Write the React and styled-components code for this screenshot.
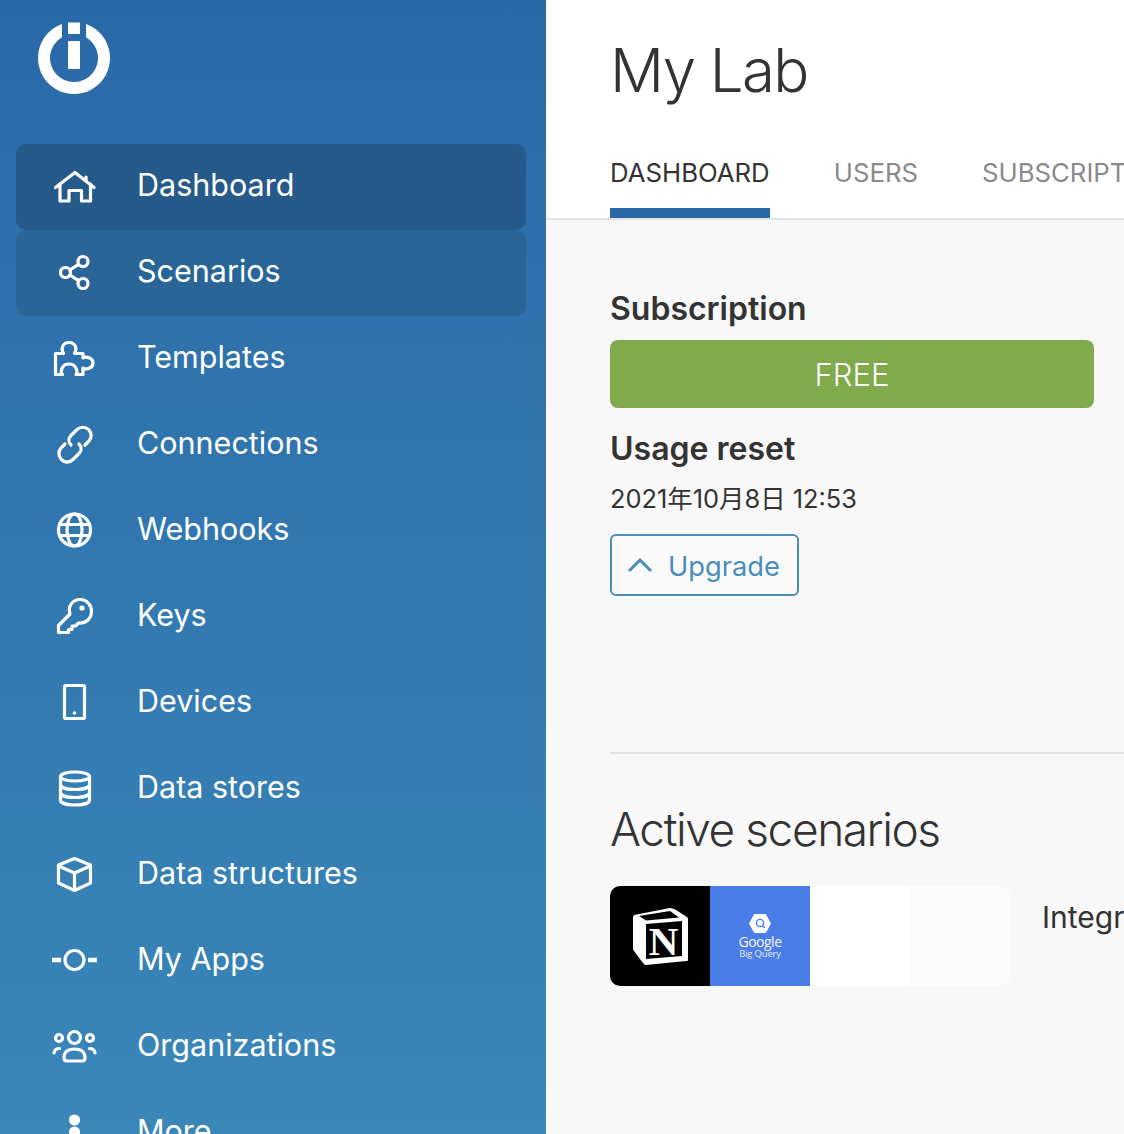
import React from 'react'
import styled, { createGlobalStyle } from 'styled-components'

const Global = createGlobalStyle`
  html, body { margin: 0; padding: 0; height: 100%; overflow: hidden; }
  body { font-family: "Inter", "Noto Sans CJK JP", sans-serif; color: #333; }
`

const Page = styled.div`
  display: flex;
  width: 1124px;
  height: 1134px;
  overflow: hidden;
`

const Sidebar = styled.aside`
  flex: 0 0 546px;
  height: 1134px;
  overflow: hidden;
  background: linear-gradient(180deg, #2a69a8 0%, #3a87b8 100%);
`

const LogoWrap = styled.div`
  height: 144px;
  padding: 21px 0 0 38px;
  box-sizing: border-box;
`

const Nav = styled.nav`
  display: flex;
  flex-direction: column;
  padding: 0 20px 0 16px;
`

const NavItem = styled.a`
  display: flex;
  align-items: center;
  flex: 0 0 86px;
  padding-left: 36px;
  box-sizing: border-box;
  border-radius: 10px;
  color: #fff;
  font-size: 30.5px;
  background: ${p => (p.$state === 'active' ? '#255a8a' : p.$state === 'hover' ? '#2a6598' : 'transparent')};
`

const NavLabel = styled.span`
  padding-bottom: 5px;
`

const IconBox = styled.span`
  display: flex;
  justify-content: center;
  width: 46px;
  margin-right: 39px;
  svg {
    width: 46px;
    height: 46px;
    fill: none;
    stroke: #fff;
    stroke-width: 3.2;
    stroke-linecap: round;
    stroke-linejoin: round;
  }
`

const Main = styled.main`
  flex: 1;
  min-width: 0;
  background: #f8f8f8;
  overflow: hidden;
`

const Header = styled.header`
  height: 220px;
  box-sizing: border-box;
  padding-left: 64px;
  background: #fff;
  border-bottom: 2px solid #e2e2e2;
  display: flex;
  flex-direction: column;
`

const Title = styled.h1`
  margin: 0;
  height: 140px;
  line-height: 140px;
  font-size: 60px;
  font-weight: 300;
  letter-spacing: -1.6px;
  color: #333;
  white-space: nowrap;
`

const Tabs = styled.div`
  display: flex;
  gap: 64px;
  white-space: nowrap;
`

const Tab = styled.div`
  height: 78px;
  box-sizing: border-box;
  padding-top: 17px;
  font-size: 25.75px;
  line-height: 32px;
  color: ${p => (p.$active ? '#333' : '#8a8a8a')};
  border-bottom: 10px solid ${p => (p.$active ? '#2a69a8' : 'transparent')};
`

const Section = styled.section`
  margin-left: 64px;
  height: 534px;
  box-sizing: border-box;
  padding-top: 68px;
  border-bottom: 2px solid #e2e2e2;
`

const Column = styled.div`
  width: 484px;
`

const Label = styled.h3`
  margin: 0;
  font-size: 32px;
  line-height: 42px;
  font-weight: 600;
  color: #333;
`

const PlanBar = styled.div`
  height: 68px;
  margin-top: 10px;
  border-radius: 8px;
  background: #80aa4b;
  color: #fff;
  font-size: 31px;
  line-height: 70px;
  text-align: center;
  font-weight: 300;
`

const ResetLabel = styled(Label)`
  margin-top: 20px;
`

const DateText = styled.div`
  margin-top: 9px;
  font-size: 25.4px;
  line-height: 40px;
  color: #333;
`

const UpgradeBtn = styled.button`
  display: flex;
  align-items: center;
  gap: 15px;
  height: 62px;
  margin-top: 15px;
  padding: 0 17px 0 15px;
  background: #fafafa;
  border: 2px solid #4a8dbb;
  border-radius: 6px;
  color: #4a8dbb;
  font-family: inherit;
  font-size: 27.3px;
  svg {
    width: 26px;
    height: 16px;
    fill: none;
    stroke: #4a8dbb;
    stroke-width: 3;
  }
`

const UpgradeText = styled.span`
  padding-top: 2px;
`

const ScenarioSection = styled.section`
  margin-left: 64px;
`

const Heading = styled.h2`
  margin: 0;
  padding-top: 45px;
  font-size: 46px;
  line-height: 60px;
  font-weight: 300;
  letter-spacing: -1.42px;
  color: #333;
  white-space: nowrap;
`

const ScenarioRow = styled.div`
  display: flex;
  gap: 32px;
  margin-top: 27px;
  white-space: nowrap;
`

const Tiles = styled.div`
  display: flex;
  flex: 0 0 400px;
  border-radius: 10px;
  overflow: hidden;
`

const Tile = styled.div`
  flex: 0 0 100px;
  height: 100px;
  display: flex;
  flex-direction: column;
  align-items: center;
  justify-content: center;
  background: ${p => p.$bg};
`

const NotionBox = styled.div`
  position: relative;
  width: 55px;
  height: 57px;
  svg {
    position: absolute;
    inset: 0;
    width: 100%;
    height: 100%;
  }
`

const NotionN = styled.span`
  position: absolute;
  left: 11px;
  top: 12px;
  width: 40px;
  text-align: center;
  color: #fff;
  font-family: "Liberation Serif", serif;
  font-weight: 700;
  font-size: 41px;
  line-height: 42px;
`

const BqIcon = styled.svg`
  width: 22px;
  height: 21px;
`

const BqName = styled.span`
  color: #fff;
  font-family: "Open Sans", sans-serif;
  font-size: 14px;
  line-height: 15px;
  letter-spacing: -0.5px;
  opacity: 0.95;
`

const BqSub = styled.span`
  color: #e4ebfb;
  font-family: "Open Sans", sans-serif;
  font-size: 9.5px;
  line-height: 10px;
  letter-spacing: -0.2px;
`

const ScenarioName = styled.div`
  padding-top: 13px;
  font-size: 30px;
  line-height: 36px;
  color: #333;
`

const icons = {
  home: (
    <>
      <path d="M3.5 23.5 L23 8.5 L42 23.5" />
      <path d="M8 20 V37 H17 V26.5 H29.5 V37 H38.5 V20" />
      <path d="M34 13 V16" />
    </>
  ),
  share: (
    <>
      <circle cx="31" cy="11.5" r="5" />
      <circle cx="13.5" cy="22.5" r="5" />
      <circle cx="31" cy="33.5" r="5" />
      <path d="M18 20 L26.5 14.3 M18 25 L26.5 30.7" />
    </>
  ),
  puzzle: (
    <path d="M3.5 38.5 V17.5 H11.5 C8.5 13 10.5 6.5 17 6.5 C23.5 6.5 25.5 13 22.5 17.5 H31 V22 C34 20 41 21.5 41 27 C41 32.5 34 34 31 32 V38.5 H24 C26 36 24.5 28 17 28 C9.5 28 8 36 10.5 38.5 Z" />
  ),
  link: (
    <g transform="translate(0,-2)">
      <path d="M19 25 C16 22 16.5 18 19 15.5 L25 9.5 C28.5 6.5 33.5 6.5 36.5 9.5 C40 13 40 18 36.5 21.5 L33 25" />
      <path d="M27 24 C30 27 29.5 31 27 33.5 L21 39.5 C17.5 43 12.5 43 9.5 39.5 C6 36 6 31 9.5 27.5 L13 24" />
    </g>
  ),
  globe: (
    <>
      <circle cx="22.5" cy="22" r="16" />
      <ellipse cx="22.5" cy="22" rx="7.5" ry="16" />
      <path d="M7.5 16.5 H37.5 M7.5 27.5 H37.5" />
    </>
  ),
  key: (
    <>
      <path d="M6.5 38.5 V31.5 L18 20 C15.5 12.5 20.5 5.5 28 5.5 C35 5.5 39.5 11 39.5 17.5 C39.5 24.5 33.5 30 26.5 29 L23.5 32 H20 V35.5 H16.5 V38.5 Z" />
      <circle cx="30" cy="14" r="2.6" fill="#fff" stroke="none" />
    </>
  ),
  device: (
    <>
      <rect x="12.5" y="5.5" width="20" height="33" rx="1.5" />
      <circle cx="22.5" cy="33" r="1.8" fill="#fff" stroke="none" />
    </>
  ),
  database: (
    <>
      <ellipse cx="23" cy="10.5" rx="14.5" ry="4.5" />
      <path d="M8.5 10.5 V34 C8.5 37 14.5 39 23 39 C31.5 39 37.5 37 37.5 34 V10.5" />
      <path d="M8.5 18.5 C8.5 21.5 14.5 23.5 23 23.5 C31.5 23.5 37.5 21.5 37.5 18.5" />
      <path d="M8.5 26.5 C8.5 29.5 14.5 31.5 23 31.5 C31.5 31.5 37.5 29.5 37.5 26.5" />
    </>
  ),
  box: (
    <>
      <path d="M22.5 6.5 L38.5 13 V31 L22.5 38.5 L6.5 31 V13 Z" />
      <path d="M6.5 14 L22.5 21 L38.5 14 M22.5 21 V38.5" />
    </>
  ),
  apps: (
    <>
      <circle cx="22.5" cy="22" r="9.5" />
      <path strokeWidth="4.5" strokeLinecap="butt" d="M0 22 H9 M36 22 H45" />
    </>
  ),
  org: (
    <>
      <circle cx="22.5" cy="13.5" r="6" />
      <circle cx="7" cy="14" r="3.5" />
      <circle cx="38" cy="14" r="3.5" />
      <path d="M12 34 C12 28 16 25 22.5 25 C29 25 33 28 33 34 C33 36 32 37 30 37 H15 C13 37 12 36 12 34 Z" />
      <path d="M2 29 C2.5 25.5 4.5 24.5 7.5 24.5 M43 29 C42.5 25.5 40.5 24.5 37.5 24.5" />
    </>
  ),
  more: (
    <>
      <circle cx="22.5" cy="10" r="4" fill="#fff" />
      <circle cx="22.5" cy="22" r="4" fill="#fff" />
      <circle cx="22.5" cy="34" r="4" fill="#fff" />
    </>
  ),
}

const items = [
  ['home', 'Dashboard', 'active'],
  ['share', 'Scenarios', 'hover'],
  ['puzzle', 'Templates'],
  ['link', 'Connections'],
  ['globe', 'Webhooks'],
  ['key', 'Keys'],
  ['device', 'Devices'],
  ['database', 'Data stores'],
  ['box', 'Data structures'],
  ['apps', 'My Apps'],
  ['org', 'Organizations'],
  ['more', 'More'],
]

function Logo() {
  return (
    <svg width="72" height="74" viewBox="0 0 72 74">
      <path d="M24 3.06 A36 36 0 1 0 48 3.06 L48 16.2 A24 24 0 1 1 24 16.2 Z" fill="#fff" />
      <rect x="30" y="1.5" width="12" height="11.5" fill="#fff" />
      <rect x="30" y="20" width="12" height="28" rx="1" fill="#fff" />
    </svg>
  )
}

export default function App() {
  return (
    <Page>
      <Global />
      <Sidebar>
        <LogoWrap>
          <Logo />
        </LogoWrap>
        <Nav>
          {items.map(([icon, label, state]) => (
            <NavItem key={label} $state={state}>
              <IconBox>
                <svg viewBox="0 0 46 46">{icons[icon]}</svg>
              </IconBox>
              <NavLabel>{label}</NavLabel>
            </NavItem>
          ))}
        </Nav>
      </Sidebar>
      <Main>
        <Header>
          <Title>My Lab</Title>
          <Tabs>
            <Tab $active>DASHBOARD</Tab>
            <Tab>USERS</Tab>
            <Tab>SUBSCRIPTION</Tab>
          </Tabs>
        </Header>
        <Section>
          <Column>
            <Label>Subscription</Label>
            <PlanBar>FREE</PlanBar>
            <ResetLabel>Usage reset</ResetLabel>
            <DateText>2021年10月8日 12:53</DateText>
          </Column>
          <UpgradeBtn>
            <svg viewBox="0 0 26 16">
              <path d="M2 14 L13 3 L24 14" />
            </svg>
            <UpgradeText>Upgrade</UpgradeText>
          </UpgradeBtn>
        </Section>
        <ScenarioSection>
          <Heading>Active scenarios</Heading>
          <ScenarioRow>
            <Tiles>
              <Tile $bg="#000">
                <NotionBox>
                  <svg viewBox="0 0 55 57">
                    <path d="M1 7 L37 0 C39 0 41 1 43 2 L54 9 C55 10 55 11 55 12 V52 C55 53 54 53 53 53 L13 57 C12 57 11 56 10 55 L1 43 C0 42 0 41 0 40 V9 Z" fill="#fff" />
                    <path d="M13 16 L49 13 V48 L13 51 Z" fill="#000" />
                    <path d="M6 8 L37 3 L46 9.5 L13 12.5 Z" fill="#000" />
                    <path d="M4 11 L10 15 V49 L4 41 Z" fill="#fff" />
                  </svg>
                  <NotionN>N</NotionN>
                </NotionBox>
              </Tile>
              <Tile $bg="#4a7de8">
                <BqIcon viewBox="0 0 22 21">
                  <path d="M6 1 H16 C16.5 1 17 1.3 17.2 1.7 L21.6 9.7 C21.9 10.2 21.9 10.8 21.6 11.3 L17.2 19.3 C17 19.7 16.5 20 16 20 H6 C5.5 20 5 19.7 4.8 19.3 L0.4 11.3 C0.1 10.8 0.1 10.2 0.4 9.7 L4.8 1.7 C5 1.3 5.5 1 6 1 Z" fill="#fff" />
                  <circle cx="11" cy="10" r="3.6" fill="none" stroke="#4a7de8" strokeWidth="1.4" />
                  <path d="M13.5 12.5 L16 15" stroke="#4a7de8" strokeWidth="1.4" />
                </BqIcon>
                <BqName>Google</BqName>
                <BqSub>Big Query</BqSub>
              </Tile>
              <Tile $bg="#fff" />
              <Tile $bg="#fcfcfc" />
            </Tiles>
            <ScenarioName>Integromat</ScenarioName>
          </ScenarioRow>
        </ScenarioSection>
      </Main>
    </Page>
  )
}
